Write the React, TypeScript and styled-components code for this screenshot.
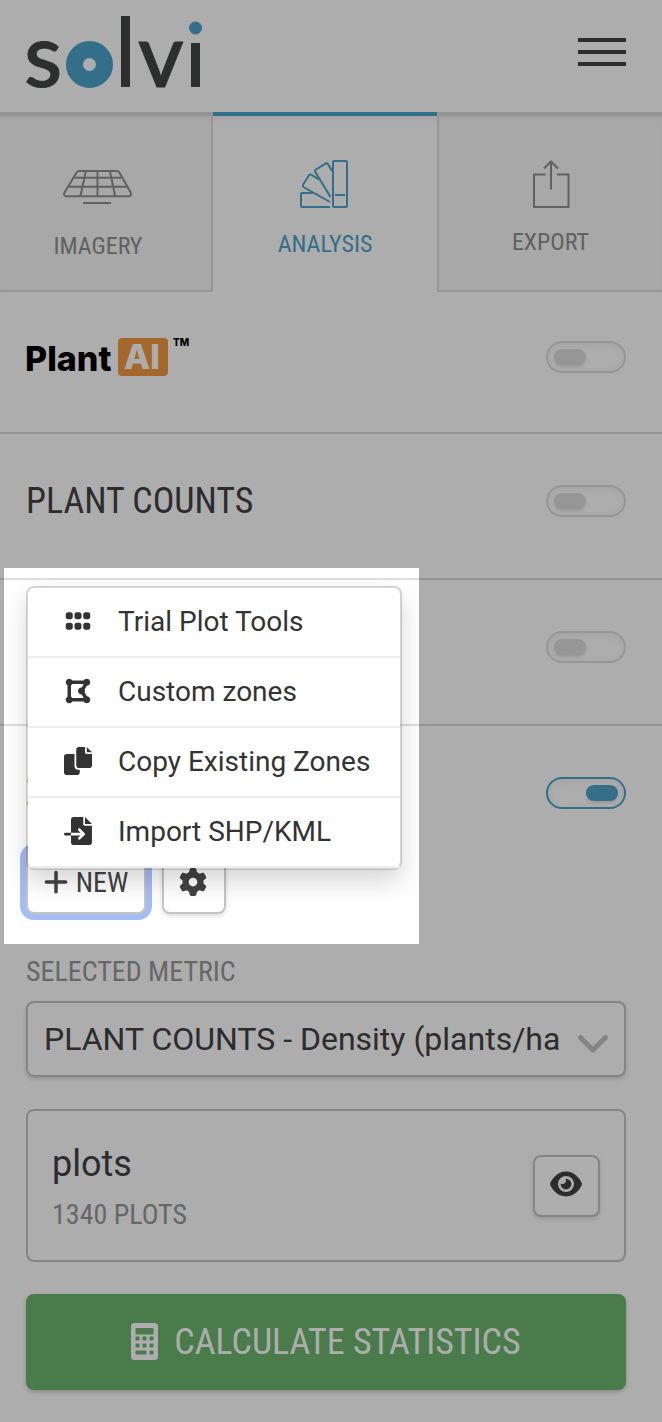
import React from 'react';
import styled, { createGlobalStyle } from 'styled-components';
import { FaGrip, FaDrawPolygon, FaPlus, FaGear, FaEye } from 'react-icons/fa6';

const blue = '#4da4cb';
const ink = '#424242';
const muted = '#989898';
const line = '#dedede';
const outline = '#c5c5c5';
const condensed = "'Roboto Condensed', Roboto, sans-serif";

const GlobalStyle = createGlobalStyle`
  *, *::before, *::after { box-sizing: border-box; }
  body {
    margin: 0;
    background: #fff;
    color: ${ink};
    font-family: Roboto, sans-serif;
    font-size: 28px;
  }
  button, select { font: inherit; color: inherit; }
  h2, p { margin: 0; font-weight: 400; }
`;

const Page = styled.div`
  overflow: hidden;
  padding-bottom: 32px;
`;

const Header = styled.header`
  display: flex;
  justify-content: space-between;
  align-items: flex-start;
  height: 112px;
  padding: 12px 36px 0 20px;
`;

const LogoLink = styled.a`
  display: block;
  svg { display: block; overflow: visible; }
`;

const MenuButton = styled.button`
  display: flex;
  flex-direction: column;
  gap: 8px;
  margin-top: 26px;
  padding: 0;
  border: 0;
  background: none;
`;

const Bar = styled.span`
  display: block;
  width: 48px;
  height: 4px;
  background: ${ink};
`;

const Tabs = styled.nav`
  display: grid;
  grid-template-columns: 213fr 224fr 225fr;
`;

const Tab = styled.button<{ $active?: boolean; $edge?: 'left' | 'right' }>`
  display: flex;
  flex-direction: column;
  align-items: center;
  gap: 20px;
  height: 180px;
  padding: 44px ${p => (p.$edge === 'right' ? 15 : 0)}px 0 0;
  border: 0 solid ${line};
  border-top: 4px solid ${p => (p.$active ? blue : '#dadada')};
  border-bottom-width: ${p => (p.$active ? 0 : 2)}px;
  border-left-width: ${p => (p.$edge === 'left' ? 2 : 0)}px;
  border-right-width: ${p => (p.$edge === 'right' ? 2 : 0)}px;
  background: ${p => (p.$active ? '#fff' : '#f8f8f8')};
  box-shadow: inset 0 6px 6px -4px rgba(0, 0, 0, 0.06);
  color: ${p => (p.$active ? blue : '#909090')};
  font-family: ${condensed};
  font-size: 24px;
  line-height: 32px;
  svg { display: block; overflow: visible; flex: none; }
`;

const Row = styled.section`
  padding: 36px 36px 46px 26px;
  border-bottom: 2px solid ${line};
`;

const RowHead = styled.div<{ $height?: number }>`
  display: flex;
  justify-content: space-between;
  align-items: center;
  height: ${p => p.$height ?? 62}px;
  svg { overflow: visible; }
`;

const Title = styled.h2`
  font-family: ${condensed};
  font-size: 36px;
  line-height: 42px;
`;

const Toggle = styled.input`
  appearance: none;
  width: 80px;
  height: 32px;
  margin: 0 0 0 auto;
  padding: 6px;
  border: 2px solid ${line};
  border-radius: 16px;
  box-shadow: inset 0 2px 8px rgba(0, 0, 0, 0.06);
  &::before {
    content: '';
    display: block;
    width: 32px;
    height: 16px;
    border-radius: 8px;
    background: ${line};
    box-shadow: 0 2px 3px rgba(0, 0, 0, 0.12);
  }
  &:checked { border-color: ${blue}; }
  &:checked::before { margin-left: 32px; background: ${blue}; }
`;

const Zones = styled.section`
  padding: 36px 36px 0 26px;
`;

const Actions = styled.div`
  display: flex;
  gap: 16px;
  margin-top: 26px;
`;

const Dropdown = styled.div`
  position: relative;
`;

const Button = styled.button<{ $width: number; $focus?: boolean }>`
  display: flex;
  align-items: center;
  justify-content: center;
  gap: 6px;
  width: ${p => p.$width}px;
  height: 64px;
  padding: 0 2px 0 0;
  border: 2px solid ${outline};
  border-radius: 8px;
  background: #fff;
  box-shadow: ${p => (p.$focus ? '0 0 0 6px #a5bdf5' : '0 2px 4px rgba(0, 0, 0, 0.14)')};
  font-family: ${condensed};
  font-size: 28px;
  svg { width: auto; height: 28px; }
`;

const ViewButton = styled(Button)`
  height: 62px;
  padding: 0 2px 4px 0;
  svg { height: 32px; }
`;

const Menu = styled.ul`
  position: absolute;
  left: 0;
  bottom: 44px;
  z-index: 1;
  min-width: 376px;
  margin: 0;
  padding: 0;
  list-style: none;
  border: 2px solid rgba(0, 0, 0, 0.16);
  border-radius: 8px;
  background: #fff;
  background-clip: padding-box;
  box-shadow: 0 12px 24px rgba(0, 0, 0, 0.16);
`;

const MenuItem = styled.li`
  border-bottom: 2px solid #ededed;
`;

const MenuAction = styled.button`
  display: flex;
  align-items: center;
  gap: 26px;
  width: 100%;
  height: 68px;
  padding: 0 28px 2px 36px;
  border: 0;
  background: none;
  color: #333;
  white-space: nowrap;
`;

const IconSlot = styled.span`
  display: flex;
  justify-content: center;
  width: 28px;
`;

const Spotlight = styled.div`
  position: absolute;
  left: -22px;
  bottom: -30px;
  z-index: 2;
  width: 415px;
  height: 376px;
  box-shadow: 0 0 0 4000px rgba(0, 0, 0, 0.32);
  pointer-events: none;
`;

const FieldLabel = styled.label`
  display: block;
  margin: 41px 0 12px;
  color: ${muted};
  font-family: ${condensed};
  font-size: 28px;
  line-height: 34px;
`;

const SelectBox = styled.div`
  display: grid;
  align-items: center;
  > * { grid-area: 1 / 1; }
  svg { justify-self: end; margin: 10px 16px 0 0; pointer-events: none; }
`;

const Select = styled.select`
  appearance: none;
  width: 100%;
  height: 76px;
  padding: 0 60px 0 16px;
  border: 2px solid ${outline};
  border-radius: 8px;
  background: #fff;
  box-shadow: 0 2px 4px rgba(0, 0, 0, 0.16);
  font-size: 32px;
`;

const Card = styled.div`
  display: flex;
  justify-content: space-between;
  align-items: center;
  margin: 32px 0;
  padding: 24px;
  border: 2px solid ${outline};
  border-radius: 8px;
`;

const CardTitle = styled.p`
  font-size: 36px;
  line-height: 58px;
`;

const CardMeta = styled.p`
  color: ${muted};
  font-family: ${condensed};
  font-size: 28px;
  line-height: 43px;
`;

const Primary = styled.button`
  display: flex;
  align-items: center;
  justify-content: center;
  gap: 16px;
  width: 100%;
  height: 96px;
  border: 0;
  border-radius: 8px;
  background: #6db66e;
  box-shadow: 0 2px 4px rgba(0, 0, 0, 0.2);
  color: #fff;
  font-family: ${condensed};
  font-size: 36px;
`;

const SolviLogo = () => (
  <svg width="190" height="84" viewBox="20 12 190 84" role="img" aria-label="solvi">
    <g fill="#434645" fontFamily="Lato, sans-serif" fontWeight="500" fontSize="88">
      <text x="24" y="87" stroke="#434645" strokeWidth="1">s</text>
      <rect x="121" y="16" width="9" height="71" />
      <text x="138" y="87" stroke="#434645" strokeWidth="1">v</text>
      <rect x="191" y="43" width="9" height="44" />
    </g>
    <circle cx="89.5" cy="64.5" r="15" fill="none" stroke={blue} strokeWidth="17" />
    <circle cx="195.5" cy="28" r="6.5" fill={blue} />
  </svg>
);

const PlantAiLogo = () => (
  <svg width="166" height="42" viewBox="26 336 166 42" role="img" aria-label="Plant AI">
    <g fontFamily="Inter, sans-serif" fontWeight="800">
      <text x="25" y="371" fontSize="34" fill="#000">Plant</text>
      <rect x="118" y="338" width="50" height="38" rx="4" fill="#f39a41" />
      <text x="124" y="369" fontSize="34" fill="#fff">AI</text>
      <text x="173" y="346" fontSize="10" fill="#000">TM</text>
    </g>
  </svg>
);

const ImageryIcon = () => (
  <svg width="70" height="50" viewBox="63 160 70 50" fill="none" stroke="currentColor" strokeWidth="2">
    <path d="M79.500 171H116.500Q118.500 171 119.500 172.700L130.700 192.500Q132.200 196 128.700 196.200H66.700Q62.800 196 64.500 192.500L76.500 172.700Q77.500 171 79.500 171ZM75 177.800H121M69 186.800H127M85.800 171L80.500 196M97.500 171V196M109.800 171L115.200 196" />
    <path d="M83 203H111" />
  </svg>
);

const AnalysisIcon = () => (
  <svg width="50" height="48" viewBox="300 160 50 48" fill="none" stroke="currentColor" strokeWidth="2" strokeLinejoin="round">
    <rect x="333" y="161" width="14" height="46" rx="1" />
    <path d="M335 195H345M330 207H302Q301 207 301 206V194Q301 193 302 193H313M330 202L303.500 187Q302.300 186 303 184.800L309 175.300Q310 174 311.500 174.800L319 179.500M330.500 197L315.300 172Q314.500 170.500 316 169.500L325.500 163.700Q327 162.800 328 164L332 171" />
  </svg>
);

const ExportIcon = () => (
  <svg width="38" height="46" viewBox="533 160 38 46" fill="none" stroke="currentColor" strokeWidth="2">
    <path d="M546.500 174.500H535V207H569.500V174.500H558M552 189.500V161.500M545 168.500L552 161.500L559 168.500" />
  </svg>
);

const CopyIcon = () => (
  <svg width="28" height="28" viewBox="0 0 512 512" fill="currentColor">
    <path d="M384 96L384 0h-112c-26.510 0-48 21.490-48 48v288c0 26.510 21.490 48 48 48H464c26.510 0 48-21.490 48-48V128h-95.100C398.400 128 384 113.600 384 96zM416 0v96h96L416 0zM192 352V128h-144c-26.510 0-48 21.490-48 48v288c0 26.510 21.490 48 48 48h192c26.510 0 48-21.490 48-48L288 416h-32C220.700 416 192 387.300 192 352z" />
  </svg>
);

const ImportIcon = () => (
  <svg width="28" height="28" viewBox="0 0 512 512" fill="currentColor">
    <path d="M384 0v128h128L384 0zM352 128L352 0H176C149.500 0 128 21.490 128 48V288h174.100l-39.030-39.030c-9.375-9.375-9.375-24.560 0-33.940s24.560-9.375 33.940 0l80 80c9.375 9.375 9.375 24.560 0 33.940l-80 80c-9.375 9.375-24.560 9.375-33.940 0C258.300 404.300 256 398.200 256 392s2.344-12.280 7.031-16.970L302.100 336H128v128C128 490.500 149.500 512 175.100 512h288c26.510 0 48-21.490 48-48V160h-127.100C366.300 160 352 145.700 352 128zM24 288C10.750 288 0 298.700 0 312c0 13.250 10.750 24 24 24H128V288H24z" />
  </svg>
);

const CalculatorIcon = () => (
  <svg width="27" height="38" viewBox="0 0 27 38" fill="#6db66e">
    <rect width="27" height="37" rx="3.500" fill="currentColor" />
    <rect x="4.500" y="5" width="18" height="6.500" rx="1" />
    {[13.5, 20.5].map(y => [4.5, 11.5, 18.5].map(x => (
      <rect key={`${x}-${y}`} x={x} y={y} width="4" height="4" rx="1" />
    )))}
    <rect x="4.500" y="27.500" width="11" height="4" rx="1" />
    <rect x="18.500" y="27.500" width="4" height="4" rx="1" />
  </svg>
);

const ChevronIcon = () => (
  <svg width="34" height="22" viewBox="0 0 34 22" fill="none" stroke={outline} strokeWidth="5" strokeLinecap="round" strokeLinejoin="round">
    <path d="M4.500 4.500L17 17L29.500 4.500" />
  </svg>
);

const menuItems = [
  { label: 'Trial Plot Tools', icon: <FaGrip /> },
  { label: 'Custom zones', icon: <FaDrawPolygon /> },
  { label: 'Copy Existing Zones', icon: <CopyIcon /> },
  { label: 'Import SHP/KML', icon: <ImportIcon /> },
];

export default function App() {
  return (
    <>
      <GlobalStyle />
      <Page>
        <Header>
          <LogoLink href="#"><SolviLogo /></LogoLink>
          <MenuButton aria-label="Open menu"><Bar /><Bar /><Bar /></MenuButton>
        </Header>
        <Tabs>
          <Tab $edge="right"><ImageryIcon />IMAGERY</Tab>
          <Tab $active><AnalysisIcon />ANALYSIS</Tab>
          <Tab $edge="left"><ExportIcon />EXPORT</Tab>
        </Tabs>
        <Row>
          <RowHead $height={58}>
            <PlantAiLogo />
            <Toggle type="checkbox" aria-label="Plant AI" />
          </RowHead>
        </Row>
        <Row>
          <RowHead>
            <Title as="label" htmlFor="counts">PLANT COUNTS</Title>
            <Toggle id="counts" type="checkbox" />
          </RowHead>
        </Row>
        <Row>
          <RowHead>
            <Toggle type="checkbox" aria-label="Plant health" />
          </RowHead>
        </Row>
        <Zones>
          <RowHead>
            <Title as="label" htmlFor="zones">ZONES</Title>
            <Toggle id="zones" type="checkbox" defaultChecked />
          </RowHead>
          <Actions>
            <Dropdown>
              <Button $width={120} $focus aria-haspopup="true" aria-expanded="true">
                <FaPlus />NEW
              </Button>
              <Menu>
                {menuItems.map(item => (
                  <MenuItem key={item.label}>
                    <MenuAction>
                      <IconSlot>{item.icon}</IconSlot>
                      {item.label}
                    </MenuAction>
                  </MenuItem>
                ))}
              </Menu>
              <Spotlight />
            </Dropdown>
            <Button $width={64} aria-label="Zone settings"><FaGear /></Button>
          </Actions>
          <FieldLabel htmlFor="metric">SELECTED METRIC</FieldLabel>
          <SelectBox>
            <Select id="metric">
              <option>PLANT COUNTS - Density (plants/ha</option>
            </Select>
            <ChevronIcon />
          </SelectBox>
          <Card>
            <div>
              <CardTitle>plots</CardTitle>
              <CardMeta>1340 PLOTS</CardMeta>
            </div>
            <ViewButton $width={67} aria-label="Show plots"><FaEye /></ViewButton>
          </Card>
          <Primary><CalculatorIcon />CALCULATE STATISTICS</Primary>
        </Zones>
      </Page>
    </>
  );
}
